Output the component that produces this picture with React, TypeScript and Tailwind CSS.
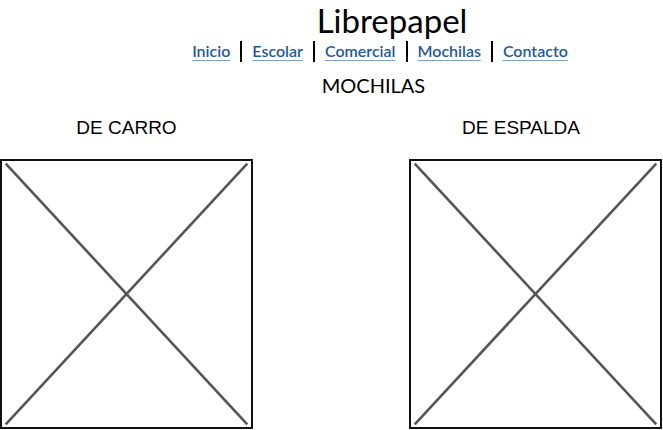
import React from 'react';

const links = ['Inicio', 'Escolar', 'Comercial', 'Mochilas', 'Contacto'];

const Placeholder = () => (
  <div className="relative w-[253px] h-[270px] border-[2.5px] border-[#111] bg-white">
    <svg className="absolute inset-0 w-full h-full" viewBox="0 0 100 100" preserveAspectRatio="none">
      <line x1="1.5" y1="1" x2="98.5" y2="99" stroke="#555" strokeWidth="2.6" vectorEffect="non-scaling-stroke" />
      <line x1="98.5" y1="1" x2="1.5" y2="99" stroke="#555" strokeWidth="2.6" vectorEffect="non-scaling-stroke" />
    </svg>
  </div>
);

export default function App() {
  return (
    <div className="w-[663px] h-[430px] bg-white overflow-hidden font-['Lato',sans-serif] text-black">
      {/* Header */}
      <header className="flex flex-col pt-[2px]">
        <h1 className="pl-[121px] text-center text-[33px] leading-[36px] font-normal">Librepapel</h1>
        <nav className="pl-[97px] mt-[1px] flex justify-center items-center gap-[10px] text-[16px] leading-[24px] font-semibold">
          {links.map((l, i) => (
            <React.Fragment key={l}>
              {i > 0 && <span className="w-[2px] h-[21px] bg-black" />}
              <a href="#" className="text-[#1f5a96] underline decoration-[#7d9fc4] underline-offset-[3px]">{l}</a>
            </React.Fragment>
          ))}
        </nav>
        <h2 className="pl-[84px] mt-[10px] text-center text-[20px] leading-[24px]">MOCHILAS</h2>
      </header>

      {/* Products */}
      <section className="mt-[20px] flex justify-between pr-[1px]">
        <div className="flex flex-col">
          <p className="text-center font-['Liberation_Sans',sans-serif] text-[19px] leading-[22px]">DE CARRO</p>
          <div className="mt-[20px]">
            <Placeholder />
          </div>
        </div>
        <div className="flex flex-col">
          <p className="pr-[29px] text-center font-['Liberation_Sans',sans-serif] text-[19px] leading-[22px]">DE ESPALDA</p>
          <div className="mt-[20px]">
            <Placeholder />
          </div>
        </div>
      </section>
    </div>
  );
}
